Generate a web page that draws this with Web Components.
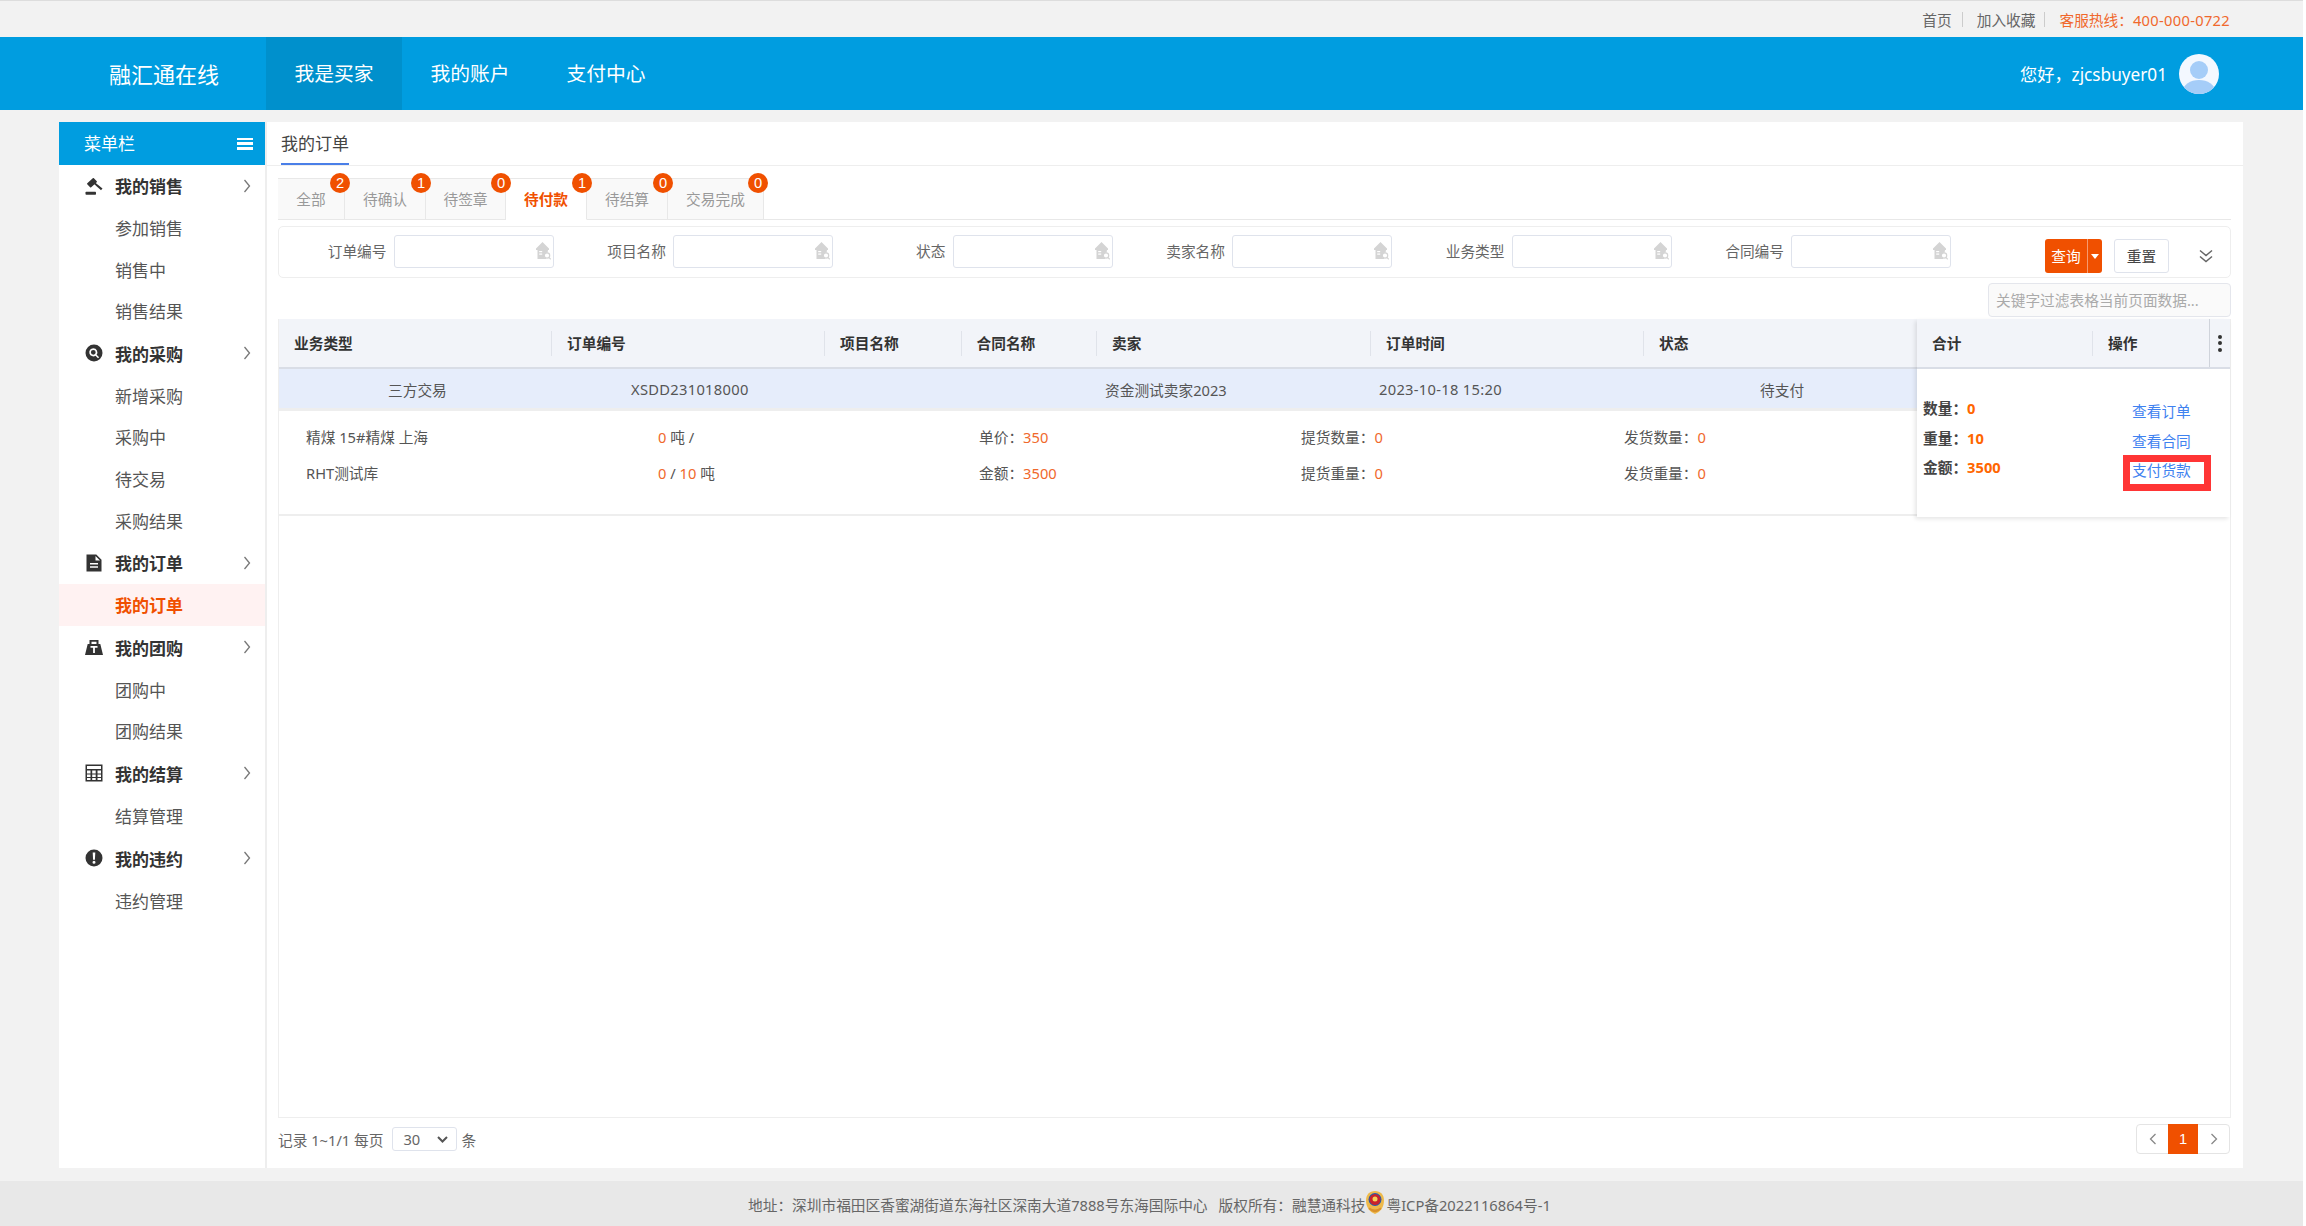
<!DOCTYPE html>
<html lang="zh">
<head>
<meta charset="utf-8">
<title>融汇通在线</title>
<style>
  html, body { margin: 0; padding: 0; }
  body {
    width: 2303px; height: 1226px; overflow: hidden; background: #fff;
    font-family: "Noto Sans", "Noto Sans CJK SC", sans-serif;
    font-size: 14.7px; color: #555;
  }
  #app { display: flex; flex-direction: column; height: 1226px; background: #f2f2f2; }
</style>
</head>
<body>
<div id="app">
  <top-links></top-links>
  <main-header></main-header>
  <page-body></page-body>
  <site-footer></site-footer>
</div>

<script>
const ORANGE = "#f05000";

const ICONS = {
  gavel: `<rect x="2.500" y="3" width="9" height="5.500" rx=".6" transform="rotate(-42 7 5.750)"/><path d="M8.500 6.500l1.300-1.300 7.700 6.300-1.500 1.800z"/><rect x=".5" y="14.800" width="10.500" height="3" rx=".7"/>`,
  search: `<path fill-rule="evenodd" d="M9 .5a8.500 8.500 0 1 0 0 17 8.500 8.500 0 0 0 0-17zM8.300 4.200a4.100 4.100 0 0 1 3.300 6.500l2.500 2.500-1.100 1.100-2.500-2.500a4.100 4.100 0 1 1-2.200-7.600zm0 1.700a2.400 2.400 0 1 0 0 4.800 2.400 2.400 0 0 0 0-4.800z"/>`,
  file: `<path fill-rule="evenodd" d="M1.500 .5h9.800l5.200 5.200V17.500h-15zM10.500 2v4.500H15zM5 9v1.500h8V9zm0 3.200v1.500h8v-1.500z"/>`,
  weight: `<path fill-rule="evenodd" d="M4.500 2h9v4h1.800L18 17H0L2.700 6h1.800zm2 1.800V6h5V3.800zM5.500 8v1.800h2.600V15h1.800V9.800h2.600V8z"/>`,
  calc: `<path fill-rule="evenodd" d="M.5 .5h17v17H.5zM2 2v3h14V2zM2 6.500v3h3.500v-3zm5.200 0v3h3.500v-3zm5.300 0v3H16v-3zM2 10.500V13h3.500v-2.500zm5.200 0V13h3.500v-2.500zm5.300 0V13H16v-2.500zM2 14v2h3.500v-2zm5.200 0v2h3.500v-2zm5.300 0v2H16v-2z"/>`,
  warn: `<path fill-rule="evenodd" d="M9 .5a8.500 8.500 0 1 0 0 17 8.500 8.500 0 0 0 0-17zM7.700 3.500h2.600l-.4 7.200H8.100zM9 11.800a1.500 1.500 0 1 1 0 3 1.500 1.500 0 0 1 0-3z"/>`
};

// small helper so each element only has to give its css + html
function component(tag, css, html) {
  customElements.define(tag, class extends HTMLElement {
    constructor() {
      super();
      this.attachShadow({ mode: "open" });
    }
    connectedCallback() {
      const body = typeof html === "function" ? html(this) : html;
      this.shadowRoot.innerHTML = `<style>${css}</style>${body}`;
    }
  });
}

component("top-links", `
  :host { display: flex; justify-content: flex-end; align-items: center; height: 36px; border-top: 1px solid #ddd;
    background: #f2f2f2; padding-right: 73px; font-size: 14.7px; color: #666; }
  i { width: 1px; height: 15px; background: #ccc; margin: 0 14px 0 10px; }
  i.b { margin: 0 14px 0 9px; }
  b { font-weight: 400; color: #f0682c; }
  b span { letter-spacing: .3px; }
`, `<span>首页</span><i></i><span>加入收藏</span><i class="b"></i><b>客服热线：<span>400-000-0722</span></b>`);

component("main-header", `
  :host { display: flex; align-items: stretch; height: 73px; background: #009de0; color: #fff; }
  .logo { width: 266px; box-sizing: border-box; padding-left: 109px; font-size: 22px; line-height: 75px; }
  nav { display: flex; }
  a { width: 136px; text-align: center; font-size: 19.800px; line-height: 73px; }
  a.on { background: #0090cc; }
  .user { margin-left: auto; display: flex; align-items: center; gap: 12px; padding-right: 84px; font-size: 17.200px; }
  svg { width: 40px; height: 40px; display: block; }
`, `
  <div class="logo">融汇通在线</div>
  <nav><a class="on">我是买家</a><a>我的账户</a><a>支付中心</a></nav>
  <div class="user"><span>您好，zjcsbuyer01</span>
    <svg viewBox="0 0 40 40"><defs><clipPath id="c"><circle cx="20" cy="20" r="20"/></clipPath></defs>
      <circle cx="20" cy="20" r="20" fill="#f3f8ff"/>
      <g clip-path="url(#c)" fill="#a5cdf8"><circle cx="20" cy="16" r="9"/><ellipse cx="20" cy="37" rx="16" ry="11"/></g>
    </svg>
  </div>`);

component("page-body", `
  :host { display: flex; flex: 1; min-height: 0; padding: 12px 60px 13px 59px; }
`, `<side-menu></side-menu><order-panel></order-panel>`);

component("side-menu", `
  :host { display: block; width: 206px; background: #fff; border-right: 2px solid #eee; flex: none; }
  .head { height: 43px; background: #009de0; color: #fff; display: flex; align-items: center; justify-content: space-between;
    padding: 0 12px 0 25px; font-size: 17px; }
  .head span { margin-top: -2px; }
  .ham { width: 16px; height: 12px; display: flex; flex-direction: column; justify-content: space-between; }
  .ham i { height: 2.500px; background: #fff; }
  .list { margin-top: -1px; }
`, () => {
  const groups = [
    ["gavel", "我的销售", ["参加销售", "销售中", "销售结果"]],
    ["search", "我的采购", ["新增采购", "采购中", "待交易", "采购结果"]],
    ["file", "我的订单", ["我的订单"]],
    ["weight", "我的团购", ["团购中", "团购结果"]],
    ["calc", "我的结算", ["结算管理"]],
    ["warn", "我的违约", ["违约管理"]]
  ];
  const rows = groups.map(([icon, name, subs]) =>
    `<menu-group icon="${icon}" label="${name}">${subs.map(s =>
      `<menu-item ${s === "我的订单" ? "active" : ""}>${s}</menu-item>`).join("")}</menu-group>`).join("");
  return `<div class="head"><span>菜单栏</span><div class="ham"><i></i><i></i><i></i></div></div><div class="list">${rows}</div>`;
});

component("menu-group", `
  :host { display: block; }
  .row { height: 43px; display: flex; align-items: center; padding-left: 26px; font-size: 17px; font-weight: 700; color: #333; }
  svg.ic { width: 18px; height: 18px; margin-right: 12px; fill: #333; flex: none; }
  svg.ch { width: 8px; height: 16px; margin-left: auto; margin-right: 14px; fill: none; stroke: #777; stroke-width: 1.300; }
`, el => `
  <div class="row">
    <svg class="ic" viewBox="0 0 18 18">${ICONS[el.getAttribute("icon")]}</svg>
    <span>${el.getAttribute("label")}</span>
    <svg class="ch" viewBox="0 0 8 16"><path d="M1.500 2l5 6-5 6"/></svg>
  </div>
  <slot></slot>`);

component("menu-item", `
  :host { display: block; height: 41.600px; line-height: 44px; padding-left: 56px; font-size: 17px; color: #555; }
  :host([active]) { background: #fff2f2; color: ${ORANGE}; font-weight: 700; }
`, `<slot></slot>`);

component("order-panel", `
  :host { display: flex; flex-direction: column; flex: 1; min-width: 0; background: #fff; }
  .title { height: 43px; border-bottom: 1px solid #eee; padding-left: 14px; flex: none; }
  .title span { display: inline-block; height: 41px; line-height: 43px; font-size: 17px; color: #444; border-bottom: 2px solid #4a7fe8; }
  .inner { flex: 1; display: flex; flex-direction: column; min-height: 0; padding: 0 12px 0 11px; }
`, `
  <div class="title"><span>我的订单</span></div>
  <div class="inner">
    <status-tabs></status-tabs>
    <filter-bar></filter-bar>
    <order-table></order-table>
    <pager-bar></pager-bar>
  </div>`);

component("status-tabs", `
  :host { display: flex; margin-top: 12px; height: 41px; border-bottom: 1px solid #e8e8e8; flex: none; }
  .t { position: relative; box-sizing: border-box; height: 42px; background: #f9f9f9; border: 1px solid #e8e8e8; border-left: 0;
    text-align: center; line-height: 40px; font-size: 14.700px; color: #999; }
  .t:first-child { border-left: 1px solid #e8e8e8; }
  .t.on { background: #fff; color: ${ORANGE}; font-weight: 700; border-bottom-color: #fff; }
  .n { position: absolute; z-index: 1; top: -6px; right: -6px; width: 20px; height: 20px; border-radius: 50%; background: ${ORANGE};
    color: #fff; font-size: 14.700px; font-weight: 400; line-height: 20px; text-align: center; font-family: "Liberation Sans", sans-serif; }
`, () => {
  const tabs = [["全部", 2, 67], ["待确认", 1, 81], ["待签章", 0, 80], ["待付款", 1, 81], ["待结算", 0, 81], ["交易完成", 0, 96]];
  return tabs.map(([t, n, w]) =>
    `<div class="t ${t === "待付款" ? "on" : ""}" style="width:${w}px">${t}<span class="n" ${t === "交易完成" ? 'style="right:-5px"' : ""}>${n}</span></div>`).join("");
});

component("filter-bar", `
  :host { display: block; flex: none; }
  .box { margin-top: 6px; height: 52px; box-sizing: border-box; border: 1px solid #eee; border-radius: 5px; display: flex; align-items: flex-start; }
  .f { width: 279.500px; flex: none; display: flex; justify-content: flex-end; box-sizing: border-box; padding: 8px 0 0; height: 34px; }
  .f:first-child { width: 274.500px; }
  .f label { font-size: 14.700px; color: #666; line-height: 33px; margin-right: 7px; }
  .f span.in { position: relative; width: 160px; height: 33px; box-sizing: border-box; border: 1px solid #dfe3ec; border-radius: 3px; background: #fff; flex: none; }
  .f svg { position: absolute; right: 2px; top: 6px; width: 15px; height: 18px; }
  .btns { display: flex; margin: 12px 0 0 94px; }
  .q { display: flex; width: 57px; height: 34px; border-radius: 3px; background: ${ORANGE}; color: #fff; font-size: 14.700px; line-height: 34px; overflow: hidden; }
  .q b { font-weight: 400; width: 42px; text-align: center; border-right: 1px solid #f79a6e; flex: none; }
  .q i { flex: 1; display: flex; align-items: center; justify-content: center; }
  .q i::after { content: ""; border: 4px solid transparent; border-top: 5px solid #fff; border-bottom: 0; margin-top: 1px; }
  .r { width: 55px; height: 34px; box-sizing: border-box; margin-left: 12px; border: 1px solid #dfe3ec; border-radius: 3px; color: #444; font-size: 14.700px; text-align: center; line-height: 33px; }
  .more { width: 14px; height: 14px; margin: 22px 0 0 30px; fill: none; stroke: #666; stroke-width: 1.500; flex: none; }
  .kw { display: flex; justify-content: flex-end; margin-top: 5px; }
  .kw div { width: 243px; height: 34px; box-sizing: border-box; border: 1px solid #e4e6ec; border-radius: 4px; background: #fafafa; color: #aaa; font-size: 14.700px; line-height: 32px; padding-left: 7px; white-space: nowrap; overflow: hidden; }
`, () => {
  const icon = `<svg viewBox="0 0 15 18"><path fill="#d4d4d4" d="M6.500 0l6.500 6.500v1.500h-1l-.5 3.200-2 3.300.6 2.500H1.500V8H0V6.500z"/><rect x="3.200" y="9" width="3" height="1.200" fill="#fff"/><rect x="3.200" y="11.500" width="3" height="1.200" fill="#fff"/><circle cx="11" cy="13.500" r="2.700" fill="#fff" stroke="#d4d4d4" stroke-width="1.200"/><path d="M13 15.500l1.800 1.800" stroke="#d4d4d4" stroke-width="1.200"/></svg>`;
  const names = ["订单编号", "项目名称", "状态", "卖家名称", "业务类型", "合同编号"];
  const fields = names.map(n => `<div class="f"><label>${n}</label><span class="in">${icon}</span></div>`).join("");
  return `<div class="box">${fields}
    <div class="btns"><div class="q"><b>查询</b><i></i></div><div class="r">重置</div></div>
    <svg class="more" viewBox="0 0 14 14"><path d="M1 1.500l6 5 6-5M1 7.500l6 5 6-5"/></svg>
  </div>
  <div class="kw"><div>关键字过滤表格当前页面数据...</div></div>`;
});

component("order-table", `
  :host { display: block; position: relative; flex: 1; min-height: 0; margin-top: 2px; box-sizing: border-box;
    border: 1px solid #eee; border-top: 0; }
  .head { display: grid; height: 50px; background: #f2f4f9; border-bottom: 2px solid #d9dde6; box-sizing: border-box; width: 1640px;
    grid-template-columns: 273px 273px 136.500px 135.500px 274px 273px 275px; align-items: center; }
  .head div { padding-left: 15px; font-size: 14.700px; font-weight: 700; color: #333; line-height: 25px; border-right: 1px solid #e0e3ea; }
  .head div:last-child { border-right: 0; }
  .row { width: 1640px; height: 39px; background: #e6edfb; display: flex; align-items: center; font-size: 14.700px; color: #555; box-sizing: border-box; padding: 1px 0 0 109px; }
  .row span { flex: none; }
  .row .num { letter-spacing: .3px; }
  .sep { width: 1640px; height: 3px; background: #eee; }
  .detail { width: 1640px; height: 105px; box-sizing: border-box; padding: 7px 0 0 27px; font-size: 14.700px; color: #555;
    display: grid; grid-template-columns: 352px 321px 322px 323px 1fr; grid-auto-rows: 36px; align-items: center; border-bottom: 2px solid #eee; }
  em { font-style: normal; color: #f0682c; }
  .fix { position: absolute; right: 0; top: 0; width: 313px; height: 198px; background: #fff; box-shadow: -2px 2px 4px rgba(0,0,0,.1); }
  .fh { display: grid; grid-template-columns: 176px 116px 21px; height: 50px; background: #f2f4f9; border-bottom: 2px solid #d9dde6; box-sizing: border-box; align-items: center; }
  .fh div { padding-left: 15px; font-size: 14.700px; font-weight: 700; color: #333; line-height: 25px; }
  .fh div:first-child { border-right: 1px solid #e0e3ea; }
  .fh .k { padding: 0; height: 48px; box-sizing: border-box; border-left: 1px solid #cfd3db; display: flex; flex-direction: column; align-items: center; justify-content: center; gap: 2.500px; }
  .k i { width: 4px; height: 4px; border-radius: 50%; background: #333; }
  .fb { display: flex; justify-content: space-between; padding: 25px 0 0 6px; }
  .sum div { height: 29.500px; line-height: 29.500px; font-size: 14.700px; font-weight: 700; color: #444; }
  .sum em { color: #f60; }
  .ops { width: 98px; padding-top: 3px; position: relative; }
  .ops a { display: block; height: 29.500px; line-height: 29.500px; color: #3f82f0; font-size: 14.700px; }
  .mark { position: absolute; left: -9px; top: 61px; width: 88px; height: 36px; box-sizing: border-box; border: 7px solid #ff3535; }
`, `
  <div class="head">
    <div>业务类型</div><div>订单编号</div><div>项目名称</div><div>合同名称</div><div>卖家</div><div>订单时间</div><div>状态</div>
  </div>
  <div class="row">
    <span style="width:243px">三方交易</span>
    <span class="num" style="width:474px">XSDD231018000</span>
    <span style="width:274px">资金测试卖家2023</span>
    <span class="num" style="width:381px">2023-10-18 15:20</span>
    <span>待支付</span>
  </div>
  <div class="sep"></div>
  <div class="detail">
    <span>精煤 15#精煤 上海</span><span><em>0</em> 吨 /</span><span>单价：<em>350</em></span><span>提货数量：<em>0</em></span><span>发货数量：<em>0</em></span>
    <span>RHT测试库</span><span><em>0</em> / <em>10</em> 吨</span><span>金额：<em>3500</em></span><span>提货重量：<em>0</em></span><span>发货重量：<em>0</em></span>
  </div>
  <div class="fix">
    <div class="fh"><div>合计</div><div>操作</div><div class="k"><i></i><i></i><i></i></div></div>
    <div class="fb">
      <div class="sum">
        <div>数量：<em>0</em></div><div>重量：<em>10</em></div><div>金额：<em>3500</em></div>
      </div>
      <div class="ops"><a>查看订单</a><a>查看合同</a><a>支付货款</a><div class="mark"></div></div>
    </div>
  </div>`);

component("pager-bar", `
  :host { display: flex; align-items: center; height: 50px; box-sizing: border-box; padding-bottom: 8px; flex: none; font-size: 14.700px; color: #666; }
  .sel { display: flex; align-items: center; justify-content: space-between; width: 65px; height: 24px; box-sizing: border-box; margin: 0 4px 0 9px;
    border: 1px solid #dfe3ec; border-radius: 3px; padding: 0 8px 0 10px; }
  .sel svg { width: 11px; height: 7px; fill: none; stroke: #555; stroke-width: 2; }
  .pg { margin-left: auto; margin-right: 1px; display: flex; height: 30px; box-sizing: border-box; border: 1px solid #e4e4e4; border-radius: 4px; }
  .pg div { width: 31px; display: flex; align-items: center; justify-content: center; }
  .pg .on { width: 30px; background: ${ORANGE}; color: #fff; margin: -1px 0; font-family: "Liberation Sans", sans-serif; }
  .pg svg { width: 8px; height: 12px; fill: none; stroke: #888; stroke-width: 1.300; }
`, `
  <span>记录 1~1/1 每页</span>
  <div class="sel"><span>30</span><svg viewBox="0 0 11 7"><path d="M1 1l4.500 4.500L10 1"/></svg></div>
  <span>条</span>
  <div class="pg">
    <div><svg viewBox="0 0 8 12"><path d="M6.500 1l-5 5 5 5"/></svg></div>
    <div class="on">1</div>
    <div><svg viewBox="0 0 8 12"><path d="M1.500 1l5 5-5 5"/></svg></div>
  </div>`);

component("site-footer", `
  :host { display: flex; align-items: center; height: 45px; background: #e8e8e8; padding-left: 748px; font-size: 14.700px; color: #666; flex: none; white-space: nowrap; padding-top: 2px; box-sizing: border-box; }
  svg { width: 20px; height: 25px; margin: -5px 1px 0 0; flex: none; }
`, `
  <span>地址：深圳市福田区香蜜湖街道东海社区深南大道7888号东海国际中心</span>
  <span style="margin-left:11px">版权所有：融慧通科技</span>
  <svg viewBox="0 0 20 25"><path fill="#eeb94a" d="M10 1c5.500 0 9 3.800 9 9.500 0 6.500-3.500 11.500-9 13.500C4.500 22 1 17 1 10.500 1 4.800 4.500 1 10 1z"/><circle cx="10" cy="9.500" r="6.500" fill="#1f5fb0"/><circle cx="10" cy="9.500" r="5.500" fill="#c8242b"/><circle cx="10" cy="9" r="2.500" fill="#f5d259"/><path d="M3.500 19c2 2 4.500 3.200 6.500 3.200s4.500-1.200 6.500-3.200l-1-1.500c-1.500 1.300-3.500 2-5.500 2s-4-.7-5.500-2z" fill="#d9912c"/></svg>
  <span>粤ICP备2022116864号-1</span>`);
</script>
</body>
</html>
